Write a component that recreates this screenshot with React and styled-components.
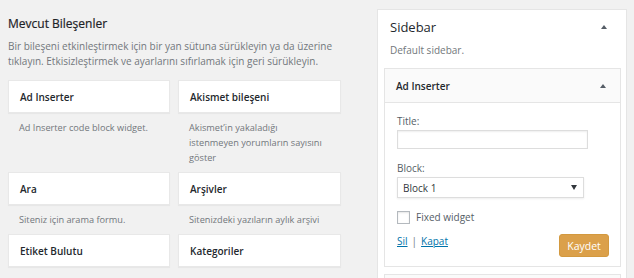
import React from 'react';
import styled, { createGlobalStyle } from 'styled-components';

const GlobalStyle = createGlobalStyle`
  html, body {
    margin: 0;
    padding: 0;
    background: #f1f1f1;
    font-family: "Open Sans", "Noto Sans", sans-serif;
    color: #23282d;
    overflow: hidden;
  }
`;

const Page = styled.div`
  display: flex;
  align-items: flex-start;
  padding-left: 8px;
  height: 278px;
  overflow: hidden;
`;

const Available = styled.section`
  width: 333px;
`;

const Heading = styled.h2`
  margin: 0;
  padding-top: 15px;
  font-size: 12px;
  line-height: 18px;
  font-weight: 400;
  color: #1d2226;
  -webkit-text-stroke: 0.2px #1d2226;
`;

const Intro = styled.p`
  margin: 6px 0 0;
  font-size: 10px;
  line-height: 15px;
  color: #72777c;
`;

const WidgetGrid = styled.div`
  display: grid;
  grid-template-columns: 162px 163px;
  column-gap: 8px;
  margin-top: 11px;
`;

const WidgetItem = styled.div`
  display: flex;
  flex-direction: column;
`;

const WidgetCard = styled.div`
  height: 33px;
  box-sizing: border-box;
  background: #fff;
  border: 1px solid #e8e8e8;
  box-shadow: 0 1px 1px rgba(0, 0, 0, 0.04);
  display: flex;
  align-items: center;
  padding-left: 11px;
  font-size: 10px;
  font-weight: 600;
  color: #23282d;
`;

const WidgetDesc = styled.div`
  padding: 7px 18px 7px 11px;
  font-size: 9.2px;
  line-height: 15px;
  color: #72777c;
`;

const SidebarPanel = styled.section`
  margin-left: 36px;
  margin-top: 9px;
  width: 250px;
  box-sizing: border-box;
  background: #fff;
  border: 1px solid #e5e5e5;
  padding: 0 5px 0 6px;
`;

const PanelHead = styled.div`
  display: flex;
  align-items: center;
  justify-content: space-between;
  padding: 7px 14px 0 6px;
`;

const PanelTitle = styled.h2`
  margin: 0;
  font-size: 13px;
  line-height: 20px;
  font-weight: 400;
  color: #23282d;
`;

const Arrow = styled.span`
  width: 0;
  height: 0;
  border-left: 3px solid transparent;
  border-right: 3px solid transparent;
  border-bottom: 4px solid #555d66;
`;

const PanelDesc = styled.p`
  margin: 5px 0 0 6px;
  font-size: 10px;
  line-height: 16px;
  color: #72777c;
`;

const WidgetBox = styled.div`
  margin-top: ${(p) => p.$gap}px;
  border: 1px solid #e5e5e5;
  background: #fff;
`;

const BoxHead = styled.div`
  height: 33px;
  display: flex;
  align-items: center;
  justify-content: space-between;
  padding: 0 14px 0 11px;
  background: #fafafa;
  border-bottom: 1px solid #e5e5e5;
  font-size: 10px;
  font-weight: 600;
  color: #23282d;
`;

const BoxBody = styled.div`
  padding: 6px 12px 9px;
`;

const Label = styled.label`
  display: block;
  font-size: 10px;
  line-height: 15px;
  color: #555d66;
  margin-top: ${(p) => p.$top || 0}px;
`;

const TextInput = styled.input`
  display: block;
  box-sizing: border-box;
  width: 191px;
  height: 19px;
  margin: 1px 0 0;
  border: 1px solid #ddd;
  box-shadow: inset 0 1px 2px rgba(0, 0, 0, 0.07);
  padding: 0 4px;
`;

const SelectBox = styled.div`
  box-sizing: border-box;
  width: 187px;
  height: 21px;
  margin-top: 1px;
  border: 1px solid #ddd;
  box-shadow: 0 1px 2px rgba(0, 0, 0, 0.07);
  display: flex;
  align-items: center;
  justify-content: space-between;
  padding: 0 6px 0 5px;
  font-size: 10px;
  color: #32373c;
`;

const SelectArrow = styled.span`
  width: 0;
  height: 0;
  border-left: 3px solid transparent;
  border-right: 3px solid transparent;
  border-top: 5px solid #32373c;
`;

const CheckRow = styled.div`
  display: flex;
  align-items: center;
  gap: 6px;
  margin-top: 13px;
  font-size: 10px;
  line-height: 13px;
  color: #555d66;
`;

const CheckBox = styled.span`
  width: 11px;
  height: 11px;
  border: 1px solid #b4b9be;
  box-shadow: inset 0 1px 2px rgba(0, 0, 0, 0.1);
`;

const Actions = styled.div`
  display: flex;
  align-items: flex-start;
  justify-content: space-between;
  margin-top: 10px;
`;

const Links = styled.div`
  font-size: 10px;
  line-height: 15px;
  color: #72777c;
  display: flex;
  gap: 4px;
`;

const Link = styled.a`
  color: #0073aa;
  text-decoration: underline;
`;

const SaveButton = styled.button`
  width: 50px;
  height: 23px;
  border: 1px solid #d3993f;
  border-radius: 3px;
  background: #dba04a;
  color: #fff;
  font-family: inherit;
  font-size: 10.5px;
  padding: 0;
  margin-right: -1px;
`;

const widgets = [
  { name: 'Ad Inserter', desc: 'Ad Inserter code block widget.' },
  { name: 'Akismet bileşeni', desc: 'Akismet\u2019in yakaladığı istenmeyen yorumların sayısını göster' },
  { name: 'Ara', desc: 'Siteniz için arama formu.' },
  { name: 'Arşivler', desc: 'Sitenizdeki yazıların aylık arşivi' },
  { name: 'Etiket Bulutu' },
  { name: 'Kategoriler' },
];

export default function App() {
  return (
    <>
      <GlobalStyle />
      <Page>
        <Available>
          <Heading>Mevcut Bileşenler</Heading>
          <Intro>
            Bir bileşeni etkinleştirmek için bir yan sütuna sürükleyin ya da üzerine
            tıklayın. Etkisizleştirmek ve ayarlarını sıfırlamak için geri sürükleyin.
          </Intro>
          <WidgetGrid>
            {widgets.map((w) => (
              <WidgetItem key={w.name}>
                <WidgetCard>{w.name}</WidgetCard>
                {w.desc && <WidgetDesc>{w.desc}</WidgetDesc>}
              </WidgetItem>
            ))}
          </WidgetGrid>
        </Available>

        <SidebarPanel>
          <PanelHead>
            <PanelTitle>Sidebar</PanelTitle>
            <Arrow />
          </PanelHead>
          <PanelDesc>Default sidebar.</PanelDesc>
          <WidgetBox $gap={10}>
            <BoxHead>
              <span>Ad Inserter</span>
              <Arrow />
            </BoxHead>
            <BoxBody>
              <Label $top={5}>Title:</Label>
              <TextInput type="text" />
              <Label $top={12}>Block:</Label>
              <SelectBox>
                <span>Block 1</span>
                <SelectArrow />
              </SelectBox>
              <CheckRow>
                <CheckBox />
                <span>Fixed widget</span>
              </CheckRow>
              <Actions>
                <Links>
                  <Link href="#">Sil</Link>
                  <span>|</span>
                  <Link href="#">Kapat</Link>
                </Links>
                <SaveButton>Kaydet</SaveButton>
              </Actions>
            </BoxBody>
          </WidgetBox>
          <WidgetBox $gap={7}>
            <BoxHead />
          </WidgetBox>
        </SidebarPanel>
      </Page>
    </>
  );
}
